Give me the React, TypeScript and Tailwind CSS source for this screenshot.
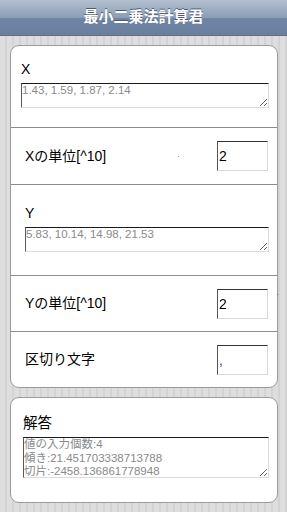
const font = "font-['Liberation_Sans','Noto_Sans_CJK_JP',sans-serif]"

// 入力欄（複数行）
function Area({ value, className }: { value: string; className: string }) {
  return (
    <textarea
      readOnly
      value={value}
      className={`block bg-white text-[#8a8a8a] text-[11.5px] leading-[13.5px] px-0 py-0 border border-t-[#1a1a1a] border-l-[#5a5a5a] border-r-[#dcdcdc] border-b-[#dcdcdc] outline-none ${className}`}
    />
  )
}

// 入力欄（一行）
function Box({ value, className = "" }: { value: string; className?: string }) {
  return (
    <input
      readOnly
      value={value}
      className={`block w-[51px] h-[30px] bg-white text-black text-[14px] px-[1px] border border-t-[#333] border-l-[#555] border-r-[#d8d8d8] border-b-[#d8d8d8] outline-none ${className}`}
    />
  )
}

export default function App() {
  return (
    <div
      className={`${font} w-[287px] h-[512px] overflow-hidden bg-[repeating-linear-gradient(90deg,#dedede_0px,#dedede_5px,#d3d3d3_5px,#d3d3d3_7px)]`}
    >
      <div className="h-[36px] flex items-center justify-center border-b border-[#5a6d88] bg-[linear-gradient(#b4c0d1,#8c9db6_50%,#6f85a3_51%,#6a809e)]">
        <h1 className="text-white font-bold text-[15px] [text-shadow:0_-1px_0_#4a5a72]">最小二乗法計算君</h1>
      </div>

      <div className="ml-[10px] mt-[9px] w-[268px] rounded-[9px] border border-[#9a9a9a] bg-white text-black text-[14px]">
        <div className="pl-[10px] pt-[15px] pb-[19px] border-b border-[#8c8c8c]">
          <div className="leading-[17px]">X</div>
          <Area value="1.43, 1.59, 1.87, 2.14" className="mt-[5px] w-[248px] h-[25px]" />
        </div>

        <div className="h-[57px] flex items-center justify-between pl-[14px] pr-[9px] border-b border-[#8c8c8c]">
          <span>Xの単位[^10]</span>
          <span className="ml-auto mr-[38px] w-[1px] h-[1px] bg-[#999]" />
          <Box value="2" />
        </div>

        <div className="pl-[14px] pt-[20px] pb-[23px] border-b border-[#8c8c8c]">
          <div className="leading-[17px]">Y</div>
          <Area value="5.83, 10.14, 14.98, 21.53" className="mt-[5px] w-[244px] h-[25px]" />
        </div>

        <div className="relative h-[56px] flex items-center justify-between pl-[14px] pr-[9px] border-b border-[#8c8c8c]">
          <span>Yの単位[^10]</span>
          <Box value="2" />
          <span className="absolute -right-[2px] top-[15px] text-[8px] text-[#2a4cd0]">`</span>
        </div>

        <div className="h-[55px] flex items-center justify-between pl-[14px] pr-[9px]">
          <span>区切り文字</span>
          <Box value="," className="!text-[#1d3fae]" />
        </div>
      </div>

      <div className="ml-[10px] mt-[9px] w-[268px] h-[106px] rounded-[9px] border border-[#9a9a9a] bg-white text-black">
        <div className="pl-[12px] pt-[16px]">
          <div className="text-[14.5px] leading-[19px]">解答</div>
          <Area
            value={"値の入力個数:4\n傾き:21.451703338713788\n切片:-2458.136861778948"}
            className="mt-[4px] w-[246px] h-[41px]"
          />
        </div>
      </div>
    </div>
  )
}
